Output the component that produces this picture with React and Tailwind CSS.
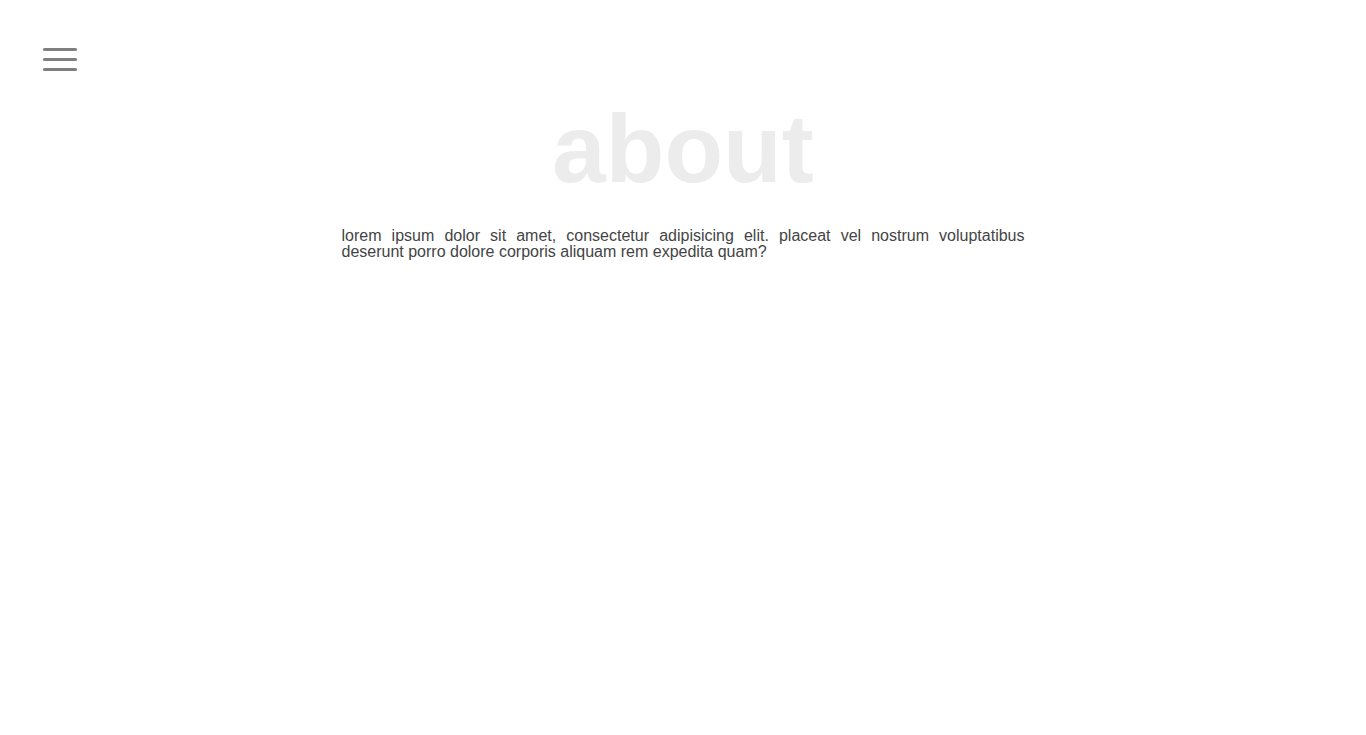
export default function App() {
  return (
    <div className="min-h-screen bg-white font-['Liberation_Sans',Arial,sans-serif]">
      <header className="px-[43px] pt-[48px]">
        <button className="flex flex-col gap-[7px] w-[34px]" aria-label="menu">
          <span className="block h-[3px] w-full rounded-full bg-[#7f7f7f]" />
          <span className="block h-[3px] w-full rounded-full bg-[#7f7f7f]" />
          <span className="block h-[3px] w-full rounded-full bg-[#7f7f7f]" />
        </button>
      </header>
      <main className="flex flex-col items-center">
        <h1 className="mt-[30px] text-[96px] font-bold leading-none text-[#ececec]">about</h1>
        <p className="mt-[31px] w-1/2 text-justify text-base leading-none text-[#444]">
          lorem ipsum dolor sit amet, consectetur adipisicing elit. placeat vel nostrum voluptatibus
          deserunt porro dolore corporis aliquam rem expedita quam?
        </p>
      </main>
    </div>
  );
}
